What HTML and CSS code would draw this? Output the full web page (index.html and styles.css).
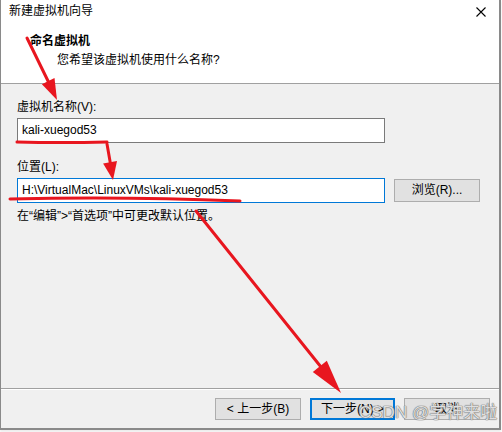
FILE: index.html
```html
<!DOCTYPE html>
<html lang="zh-CN">
<head>
<meta charset="utf-8">
<title>新建虚拟机向导</title>
<link rel="stylesheet" href="styles.css">
</head>
<body>
<div class="window">
  <div class="titlebar">
    <span class="title">新建虚拟机向导</span>
    <svg class="close" width="10" height="10" viewBox="0 0 10 10"><path d="M0.5 0.5 L9.5 9.5 M9.5 0.5 L0.5 9.5" stroke="#000" stroke-width="1.1" fill="none"/></svg>
  </div>
  <div class="header">
    <div class="h-title">命名虚拟机</div>
    <div class="h-sub">您希望该虚拟机使用什么名称?</div>
  </div>
  <div class="content">
    <div class="label">虚拟机名称(V):</div>
    <div class="row">
      <div class="input">kali-xuegod53</div>
    </div>
    <div class="label label-2">位置(L):</div>
    <div class="row">
      <div class="input focus">H:\VirtualMac\LinuxVMs\kali-xuegod53</div>
      <div class="btn browse">浏览(R)...</div>
    </div>
    <div class="note">在“编辑”&gt;“首选项”中可更改默认位置。</div>
  </div>
  <div class="footer">
    <div class="btn">&lt; 上一步(B)</div>
    <div class="btn default">下一步(N) &gt;</div>
    <div class="btn">取消</div>
  </div>
  <div class="watermark">CSDN @学神来啦</div>
  <svg class="annot" width="502" height="432" viewBox="0 0 502 432">
    <g stroke="#e8161f" stroke-width="3" fill="none" stroke-linecap="round">
      <path d="M27 38 L49 83"/>
      <path d="M17 142 Q60 143 107 142"/>
      <path d="M107 144 L110.5 164"/>
      <path d="M10 199 Q120 196 240 201"/>
      <path d="M196 211 L321 367"/>
    </g>
    <g fill="#e8161f">
      <polygon points="57,100 41.9,84.2 54.5,78"/>
      <polygon points="113,180 103.1,163.4 117,161.1"/>
      <polygon points="341,393 312.8,372 326.8,360.8"/>
    </g>
  </svg>
</div>
</body>
</html>
```
FILE: styles.css
```css
html, body {
  margin: 0;
  padding: 0;
  background: #ffffff;
}
body {
  width: 502px;
  height: 432px;
  overflow: hidden;
  font-family: "Liberation Sans", "Noto Sans CJK SC", sans-serif;
  font-size: 12px;
  line-height: 17px;
  color: #000;
}
.window {
  position: relative;
  width: 498px;
  height: 428px;
  border-left: 1px solid #8a8a8a;
  border-right: 2px solid #8a8a8a;
  border-bottom: 2px solid #8a8a8a;
  background: #f0f0f0;
  display: flex;
  flex-direction: column;
  box-shadow: 0 2px 2px rgba(0,0,0,0.08);
}
.titlebar {
  height: 28px;
  background: #fff;
  display: flex;
  align-items: flex-start;
  justify-content: space-between;
  padding: 3px 13px 0 8px;
  box-sizing: border-box;
}
.title {
  font-size: 12px;
  color: #000;
}
.close {
  margin-top: 4px;
}
.header {
  background: #fff;
  border-bottom: 1px solid #a0a0a0;
  padding: 5px 0 0 29px;
  height: 50px;
}
.h-title {
  font-weight: bold;
}
.h-sub {
  margin-top: 2px;
  padding-left: 27px;
}
.content {
  flex: 1;
  padding: 15px 0 0 16px;
}
.label {
  margin-bottom: 2px;
}
.label-2 {
  margin-top: 16px;
}
.row {
  display: flex;
  align-items: center;
  gap: 9px;
}
.input {
  height: 23px;
  line-height: 23px;
  border: 1px solid #7a7a7a;
  background: #fff;
  padding-left: 4px;
  width: 362px;
}
.input.focus {
  border-color: #0078d7;
}
.btn {
  width: 84px;
  height: 20px;
  line-height: 20px;
  border: 1px solid #adadad;
  background: #e1e1e1;
  text-align: center;
}
.browse {
  height: 21px;
  line-height: 21px;
}
.note {
  margin-top: 5px;
}
.footer {
  height: 40px;
  border-top: 1px solid #a0a0a0;
  box-shadow: inset 0 1px 0 #fff;
  display: flex;
  justify-content: flex-end;
  align-items: flex-start;
  gap: 9px;
  padding: 9px 9px 0 0;
  box-sizing: border-box;
}
.footer .btn.default {
  border: 2px solid #0078d7;
  width: 81px;
  height: 18px;
  line-height: 18px;
}
.watermark {
  position: absolute;
  left: 358px;
  top: 402px;
  font-family: "Liberation Sans", "Noto Sans CJK SC", sans-serif;
  font-size: 17px;
  line-height: 22px;
  color: rgba(245,245,245,0.85);
  text-shadow: 0 0 1px #6e6e6e, 0 0 1px #6e6e6e, 0 0 1px #888;
  white-space: nowrap;
}
.annot {
  position: absolute;
  left: -1px;
  top: 0;
  pointer-events: none;
}
```
